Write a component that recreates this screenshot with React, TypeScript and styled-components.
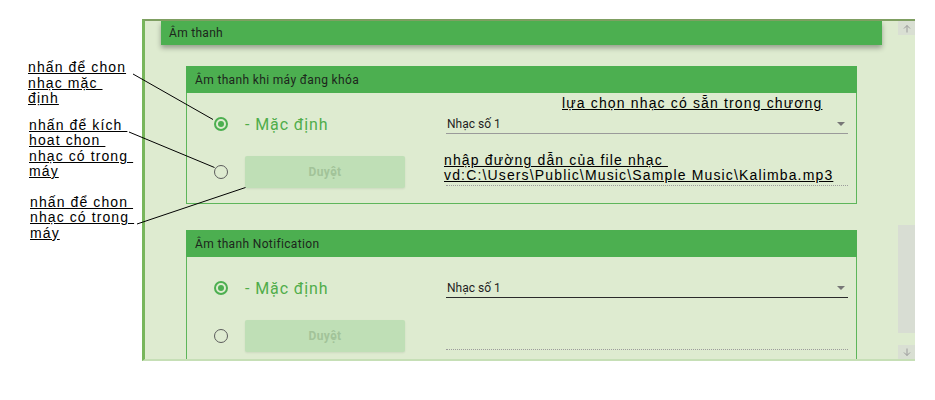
import React from "react";
import styled, { createGlobalStyle } from "styled-components";

const GlobalStyle = createGlobalStyle`
  html, body { margin: 0; padding: 0; background: #ffffff; }
  body { font-family: Roboto, "Noto Sans", Arial, sans-serif; }
  * { box-sizing: border-box; }
`;

const Page = styled.div`
  position: relative;
  width: 935px;
  height: 400px;
  display: flex;
  align-items: flex-start;
  overflow: hidden;
  background: #ffffff;
`;

const NotesColumn = styled.div`
  width: 142px;
  flex: none;
  padding-top: 60px;
`;

const Note = styled.div<{ $top: number; $left: number }>`
  margin-top: ${(p) => p.$top}px;
  padding-left: ${(p) => p.$left}px;
  font-family: "Liberation Sans", Arial, sans-serif;
  font-size: 14px;
  line-height: 15.5px;
  letter-spacing: 1.1px;
  color: #000;
`;

const NoteLine = styled.span`
  display: block;
  white-space: pre;
  text-decoration: underline;
`;

const OverNote = styled.div<{ $top: number; $left: number; $lh: number }>`
  position: absolute;
  top: ${(p) => p.$top}px;
  left: ${(p) => p.$left}px;
  font-family: "Liberation Sans", Arial, sans-serif;
  font-size: 14px;
  line-height: ${(p) => p.$lh}px;
  letter-spacing: 1.15px;
  color: #000;
  z-index: 2;
`;

const Window = styled.div`
  margin-top: 19px;
  width: 773px;
  height: 342px;
  flex: none;
  display: flex;
  background: #deebd0;
  border-left: 3px solid #78b65c;
  border-top: 2px solid #7f9f62;
  border-bottom: 2px solid #c6dfb6;
  overflow: hidden;
`;

const Content = styled.div`
  flex: 1;
  min-width: 0;
  padding: 0 16px;
  overflow: hidden;
`;

const TitleBar = styled.div`
  height: 24px;
  background: #4caf50;
  box-shadow: 0 3px 5px rgba(0, 0, 0, 0.32);
  padding-left: 8px;
  display: flex;
  align-items: center;
  font-size: 12px;
  letter-spacing: 0.3px;
  color: #1c261c;
`;

const SectionList = styled.div`
  padding: 21px 25px 0;
  display: flex;
  flex-direction: column;
  gap: 26px;
`;

const Section = styled.section`
  border: 1px solid #5db65a;
  border-top: none;
`;

const SectionHeader = styled.div`
  height: 27px;
  background: #4caf50;
  margin: 0 -1px;
  padding-left: 9px;
  display: flex;
  align-items: center;
  font-size: 12px;
  letter-spacing: 0.35px;
  color: #1c261c;
`;

const SectionBody = styled.div`
  padding: 7px 8px 7px 27px;
`;

const Row = styled.div`
  height: 48px;
  display: grid;
  grid-template-columns: 14px 184px 1fr;
  column-gap: 17px;
  align-items: center;
`;

const Radio = styled.span<{ $checked?: boolean }>`
  width: 14px;
  height: 14px;
  border-radius: 50%;
  border: ${(p) => (p.$checked ? "2px solid #4caf50" : "1.5px solid #5c5c5c")};
  display: flex;
  align-items: center;
  justify-content: center;
  &::after {
    content: "";
    width: 6px;
    height: 6px;
    border-radius: 50%;
    background: #4caf50;
    display: ${(p) => (p.$checked ? "block" : "none")};
  }
`;

const OptionLabel = styled.span`
  font-size: 16px;
  letter-spacing: 0.9px;
  color: #50ad4a;
`;

const BrowseButton = styled.div`
  width: 160px;
  height: 32px;
  border-radius: 2px;
  background: #bfdfb6;
  box-shadow: 0 1px 2px rgba(0, 0, 0, 0.08);
  display: flex;
  align-items: center;
  justify-content: center;
  font-size: 12px;
  font-weight: 700;
  letter-spacing: 0.4px;
  color: #a2c399;
`;

const FieldCell = styled.div`
  position: relative;
  align-self: stretch;
  display: flex;
  align-items: center;
`;

const Select = styled.div<{ $focused?: boolean }>`
  width: 100%;
  height: 20px;
  display: flex;
  align-items: center;
  justify-content: space-between;
  padding-left: 1px;
  border-bottom: 1px solid ${(p) => (p.$focused ? "#2a2a2a" : "#9a9a9a")};
  font-size: 12px;
  color: #1e1e1e;
`;

const Caret = styled.span`
  width: 0;
  height: 0;
  margin-right: 3px;
  border-left: 4px solid transparent;
  border-right: 4px solid transparent;
  border-top: 4px solid #777;
`;

const PathInput = styled.div`
  width: 100%;
  height: 28px;
  border-bottom: 1px dotted #9c9c9c;
`;

const Scrollbar = styled.div`
  width: 17px;
  flex: none;
  display: flex;
  flex-direction: column;
`;

const ScrollButton = styled.div`
  height: 14px;
  background: #d9dfd3;
  display: flex;
  align-items: center;
  justify-content: center;
`;

const Track = styled.div`
  flex: 1;
  padding-top: 190px;
`;

const Thumb = styled.div`
  height: 108px;
  background: #d8ddd3;
`;

const Overlay = styled.svg`
  position: absolute;
  left: 0;
  top: 0;
  pointer-events: none;
  z-index: 5;
`;

const Arrow = ({ down }: { down?: boolean }) => (
  <svg width="8" height="9" viewBox="0 0 8 9" style={{ transform: down ? "rotate(180deg)" : undefined }}>
    <path d="M4 8.5V1.5M1 4.5L4 1.5L7 4.5" stroke="#9b9b9b" strokeWidth="1" fill="none" />
  </svg>
);

type SectionProps = {
  title: string;
  focused?: boolean;
  notes?: boolean;
};

const SoundSection = ({ title, focused, notes }: SectionProps) => (
  <Section>
    <SectionHeader>{title}</SectionHeader>
    <SectionBody>
      <Row>
        <Radio $checked />
        <OptionLabel>- Mặc định</OptionLabel>
        <FieldCell>
          {notes && (
            <OverNote $top={-4} $left={116} $lh={15.5}>
              <NoteLine>lựa chọn nhạc có sẵn trong chương</NoteLine>
            </OverNote>
          )}
          <Select $focused={focused}>
            <span>Nhạc số 1</span>
            <Caret />
          </Select>
        </FieldCell>
      </Row>
      <Row>
        <Radio />
        <BrowseButton>Duyệt</BrowseButton>
        <FieldCell>
          {notes && (
            <OverNote $top={5} $left={-2} $lh={14.5}>
              <NoteLine>nhập đường dẫn của file nhạc </NoteLine>
              <NoteLine>vd:C:\Users\Public\Music\Sample Music\Kalimba.mp3</NoteLine>
            </OverNote>
          )}
          <PathInput />
        </FieldCell>
      </Row>
    </SectionBody>
  </Section>
);

export default function App() {
  return (
    <Page>
      <GlobalStyle />
      <NotesColumn>
        <Note $top={0} $left={28}>
          <NoteLine>nhấn để chon</NoteLine>
          <NoteLine>nhạc mặc </NoteLine>
          <NoteLine>định</NoteLine>
        </Note>
        <Note $top={11} $left={29}>
          <NoteLine>nhấn để kích </NoteLine>
          <NoteLine>hoat chon </NoteLine>
          <NoteLine>nhạc có trong </NoteLine>
          <NoteLine>máy</NoteLine>
        </Note>
        <Note $top={15} $left={30}>
          <NoteLine>nhấn để chon </NoteLine>
          <NoteLine>nhạc có trong </NoteLine>
          <NoteLine>máy</NoteLine>
        </Note>
      </NotesColumn>
      <Window>
        <Content>
          <TitleBar>Âm thanh</TitleBar>
          <SectionList>
            <SoundSection title="Âm thanh khi máy đang khóa" notes />
            <SoundSection title="Âm thanh Notification" focused />
          </SectionList>
        </Content>
        <Scrollbar>
          <ScrollButton>
            <Arrow />
          </ScrollButton>
          <Track>
            <Thumb />
          </Track>
          <ScrollButton>
            <Arrow down />
          </ScrollButton>
        </Scrollbar>
      </Window>
      <Overlay width="935" height="400" viewBox="0 0 935 400">
        <g stroke="#000" strokeWidth="1" fill="none">
          <line x1="133" y1="74" x2="213" y2="119.5" />
          <line x1="129" y1="132" x2="214.5" y2="167.5" />
          <line x1="137" y1="224" x2="245.5" y2="187.5" />
        </g>
      </Overlay>
    </Page>
  );
}
